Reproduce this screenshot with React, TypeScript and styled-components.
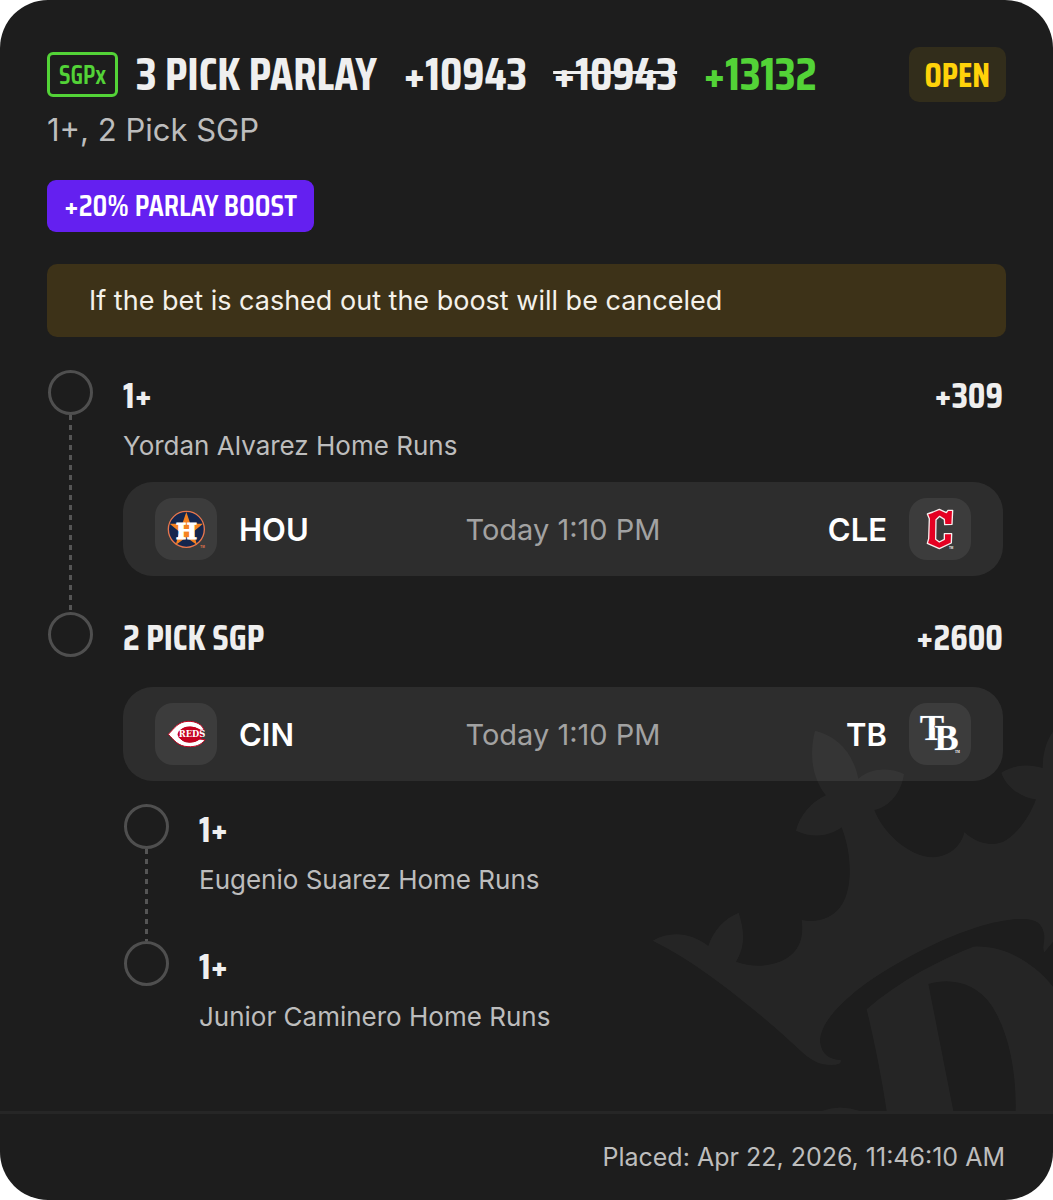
import React from "react";
import styled, { createGlobalStyle } from "styled-components";

const sans = `Inter, "Liberation Sans", Arial, sans-serif`;
const display = `"Saira Condensed", "Roboto Condensed", "Liberation Sans Narrow", "Open Sans Condensed", "DejaVu Sans Condensed", sans-serif`;

const GlobalStyle = createGlobalStyle`
  *, *::before, *::after { box-sizing: border-box; }
  body { margin: 0; background: #fff; font-family: ${sans}; }
  h1, h2, h3, p, ul, ol { margin: 0; padding: 0; }
  ul, ol { list-style: none; }
`;

const Slip = styled.article`
  display: flex;
  flex-direction: column;
  border-radius: 48px;
  overflow: hidden;
  background: #1d1d1d;
  color: #efefef;
`;

const SlipBody = styled.div`
  position: relative;
  padding: 47px 47px 76px;
`;

const Watermark = styled.svg`
  position: absolute;
  right: 0;
  bottom: 0;
  width: 413px;
  height: 411px;
  fill: rgba(255, 255, 255, 0.04);
  pointer-events: none;
`;

const Header = styled.header`
  display: flex;
  align-items: center;
  height: 55px;
`;

const SgpTag = styled.span`
  display: flex;
  align-items: center;
  justify-content: center;
  width: 71px;
  height: 45px;
  margin-right: 18px;
  border: 3px solid #53d337;
  border-radius: 6px;
  color: #53d337;
  font: 600 26px/28px ${display};
`;

const Headline = styled.div`
  display: flex;
  flex: 1;
  gap: 26px;
  padding-bottom: 2px;
  white-space: nowrap;
`;

const Title = styled.h1`
  font: 700 47px/52px ${display};
`;

const Price = styled.span<{ $boosted?: boolean }>`
  color: ${(p) => (p.$boosted ? "#53d337" : "#efefef")};
  font: 700 47px/52px ${display};
`;

const OldPrice = styled(Price).attrs({ as: "s" })`
  text-decoration: line-through 3px;
`;

const Status = styled.span`
  display: flex;
  align-items: center;
  height: 55px;
  padding: 0 16px;
  border-radius: 10px;
  background: #322d1b;
  color: #ffd20a;
  font: 700 34px/36px ${display};
`;

const Summary = styled.p`
  margin-top: 10px;
  color: #bdbdbd;
  font-size: 31px;
  line-height: 36px;
`;

const Boost = styled.p`
  width: fit-content;
  margin-top: 32px;
  padding: 0 17px;
  border-radius: 9px;
  background: #6420f0;
  color: #fff;
  font: 600 31px/52px ${display};
`;

const Notice = styled.p`
  margin-top: 32px;
  padding: 18px 42px;
  border-radius: 10px;
  background: #3d3218;
  color: #f4f1ea;
  font-size: 27px;
  line-height: 37px;
`;

const Legs = styled.ol<{ $nested?: boolean }>`
  display: flex;
  flex-direction: column;
  margin-top: ${(p) => (p.$nested ? "23px" : "33px")};
  padding-left: 1px;
  padding-right: ${(p) => (p.$nested ? "0" : "3px")};
`;

const LegRow = styled.li`
  display: flex;
  gap: 30px;
`;

const Rail = styled.div`
  display: flex;
  flex-direction: column;
  align-items: center;
  width: 45px;
`;

const Ring = styled.span`
  width: 45px;
  height: 45px;
  flex: none;
  border: 3px solid #4f4f4f;
  border-radius: 50%;
`;

const Dashes = styled.span`
  flex: 1;
  width: 3px;
  background: repeating-linear-gradient(#555 0 5px, transparent 5px 10px);
`;

const LegContent = styled.div<{ $gap: number }>`
  flex: 1;
  padding-bottom: ${(p) => p.$gap}px;
`;

const LegHead = styled.div`
  display: flex;
  justify-content: space-between;
  font: 700 37px/50px ${display};
`;

const LegTitle = styled.h2`
  font: inherit;
`;

const Market = styled.p`
  margin-top: 8px;
  color: #bdbdbd;
  font-size: 26px;
  line-height: 36px;
`;

const MatchBox = styled.div<{ $afterMarket?: boolean }>`
  display: grid;
  grid-template-columns: 1fr auto 1fr;
  align-items: center;
  margin-top: ${(p) => (p.$afterMarket ? "18px" : "25px")};
  padding: 16px 32px;
  border-radius: 30px;
  background: rgba(255, 255, 255, 0.075);
`;

const Team = styled.div<{ $away?: boolean }>`
  display: flex;
  flex-direction: ${(p) => (p.$away ? "row-reverse" : "row")};
  align-items: center;
  gap: 22px;
  color: #fff;
  font-size: 31px;
  font-weight: 600;
`;

const LogoTile = styled.span`
  display: grid;
  place-items: center;
  width: 62px;
  height: 62px;
  border-radius: 18px;
  background: rgba(255, 255, 255, 0.075);
`;

const Logo = styled.svg`
  width: 62px;
  height: 62px;
`;

const Kickoff = styled.time`
  color: #a2a2a2;
  font-size: 29px;
`;

const Footer = styled.footer`
  padding: 25px 48px;
  border-top: 3px solid #262626;
  color: #bdbdbd;
  font-size: 25px;
  line-height: 36px;
  text-align: right;
`;

const AstrosLogo = () => (
  <Logo viewBox="0 0 186 186" aria-hidden="true">
    <circle cx="94" cy="94" r="54" fill="#14264d" stroke="#e8774d" strokeWidth="4" />
    <path d="M94 42 L106 77 L144 77 L115 101 L126 141 L94 118 L62 141 L73 101 L44 77 L82 77 Z" fill="#f58220" />
    <text x="94" y="122" textAnchor="middle" fontFamily="DejaVu Serif, serif" fontWeight="700" fontSize="68" fill="#fff" stroke="#fff" strokeWidth="3">H</text>
    <text x="136" y="151" fontFamily="Liberation Sans, sans-serif" fontSize="9" fill="#e8774d">TM</text>
  </Logo>
);

const GuardiansLogo = () => (
  <Logo viewBox="0 0 186 186" aria-hidden="true">
    <path d="M55 48 L72 42 L91 34 L112 44 L117 37 L131 37 L129 79 L107 80 L106 64 L92 55 L81 65 L80 124 L91 132 L106 124 L106 107 L128 107 L127 135 L91 152 L55 136 L59 122 L61 62 Z" fill="#e50022" stroke="#f7eeee" strokeWidth="4" strokeLinejoin="round" />
    <text x="120" y="154" fontFamily="Liberation Sans, sans-serif" fontSize="9" fill="#eee">TM</text>
  </Logo>
);

const RedsLogo = () => (
  <Logo viewBox="0 0 186 186" aria-hidden="true">
    <path d="M40 94 C58 76 69 56 99 55 C122 54 143 65 147 82 L132 82 C122 70 88 67 78 82 C72 90 72 101 78 108 C90 122 120 120 133 108 L150 110 C139 127 119 132 99 131 C69 130 58 112 40 94 Z" fill="#fff" stroke="#c6011f" strokeWidth="3" />
    <ellipse cx="106" cy="94" rx="38" ry="23" fill="#c6011f" />
    <text x="111" y="103" textAnchor="middle" fontFamily="DejaVu Serif, serif" fontWeight="700" fontSize="25" fill="#fff">REDS</text>
  </Logo>
);

const RaysLogo = () => (
  <Logo viewBox="0 0 186 186" aria-hidden="true">
    <text fontFamily="Liberation Serif, serif" fontWeight="700" fontSize="110" fill="#fff" stroke="#4a5563" strokeWidth="3" paintOrder="stroke">
      <tspan x="32" y="112">T</tspan>
      <tspan x="76" y="140">B</tspan>
      <tspan x="138" y="150" fontSize="9" stroke="none">TM</tspan>
    </text>
  </Logo>
);

const CrownWatermark = () => (
  <Watermark viewBox="0 0 1239 1233" aria-hidden="true">
    <path d="M38 722 C95 690 155 700 205 738 C220 690 255 655 296 638 C312 690 318 735 288 785 C340 805 400 800 440 775 C480 750 492 710 485 660 C530 670 580 655 605 615 C640 560 635 460 605 382 C565 410 520 415 468 392 C480 345 515 305 558 286 C520 240 505 170 525 92 C595 110 640 160 655 236 C690 205 745 200 792 222 C785 275 750 320 703 330 C725 390 800 470 880 472 C930 470 965 435 973 397 C1010 430 1050 440 1090 425 C1130 405 1170 350 1188 298 C1150 295 1100 265 1084 218 C1120 195 1165 190 1208 204 C1208 160 1220 120 1239 95 L1239 725 L1213 757 C1205 740 1217 722 1212 700 C1205 670 1190 658 1150 657 C1000 655 750 790 640 880 C580 930 540 980 540 1025 C545 1065 570 1078 602 1080 C605 1090 595 1095 575 1095 C540 1095 520 1085 490 1060 C400 975 200 800 38 722 Z" />
    <path d="M680 928 C780 840 900 780 1000 740 C1090 735 1180 785 1239 860 L1239 1233 L1127 1233 C1130 1100 1100 980 1050 910 C1010 855 940 830 865 852 L940 1233 L740 1233 C725 1130 700 1010 680 928 Z" />
    <path d="M545 1233 Q600 1212 660 1233 Z" />
  </Watermark>
);

type MatchProps = {
  home: string;
  away: string;
  homeLogo: React.ReactNode;
  awayLogo: React.ReactNode;
  afterMarket?: boolean;
};

const Match = ({ home, away, homeLogo, awayLogo, afterMarket }: MatchProps) => (
  <MatchBox $afterMarket={afterMarket}>
    <Team>
      <LogoTile>{homeLogo}</LogoTile>
      {home}
    </Team>
    <Kickoff>Today 1:10 PM</Kickoff>
    <Team $away>
      <LogoTile>{awayLogo}</LogoTile>
      {away}
    </Team>
  </MatchBox>
);

type LegProps = {
  title: string;
  odds?: string;
  market?: string;
  gap?: number;
  linked?: boolean;
  children?: React.ReactNode;
};

const Leg = ({ title, market, odds, gap = 0, linked, children }: LegProps) => (
  <LegRow>
    <Rail>
      <Ring />
      {linked && <Dashes />}
    </Rail>
    <LegContent $gap={gap}>
      <LegHead>
        <LegTitle>{title}</LegTitle>
        {odds && <span>{odds}</span>}
      </LegHead>
      {market && <Market>{market}</Market>}
      {children}
    </LegContent>
  </LegRow>
);

const NestedSlot = styled.div`
  display: flow-root;
`;

export default function App() {
  return (
    <>
      <GlobalStyle />
      <Slip>
        <SlipBody>
          <CrownWatermark />
          <Header>
            <SgpTag>SGPx</SgpTag>
            <Headline>
              <Title>3 PICK PARLAY</Title>
              <Price>+10943</Price>
              <OldPrice>+10943</OldPrice>
              <Price $boosted>+13132</Price>
            </Headline>
            <Status>OPEN</Status>
          </Header>
          <Summary>1+, 2 Pick SGP</Summary>
          <Boost>+20% PARLAY BOOST</Boost>
          <Notice>If the bet is cashed out the boost will be canceled</Notice>
          <Legs>
            <Leg title="1+" odds="+309" market="Yordan Alvarez Home Runs" gap={36} linked>
              <Match home="HOU" away="CLE" homeLogo={<AstrosLogo />} awayLogo={<GuardiansLogo />} afterMarket />
            </Leg>
            <Leg title="2 PICK SGP" odds="+2600">
              <Match home="CIN" away="TB" homeLogo={<RedsLogo />} awayLogo={<RaysLogo />} />
              <NestedSlot>
                <Legs $nested>
                  <Leg title="1+" market="Eugenio Suarez Home Runs" gap={43} linked />
                  <Leg title="1+" market="Junior Caminero Home Runs" />
                </Legs>
              </NestedSlot>
            </Leg>
          </Legs>
        </SlipBody>
        <Footer>Placed: Apr 22, 2026, 11:46:10 AM</Footer>
      </Slip>
    </>
  );
}
